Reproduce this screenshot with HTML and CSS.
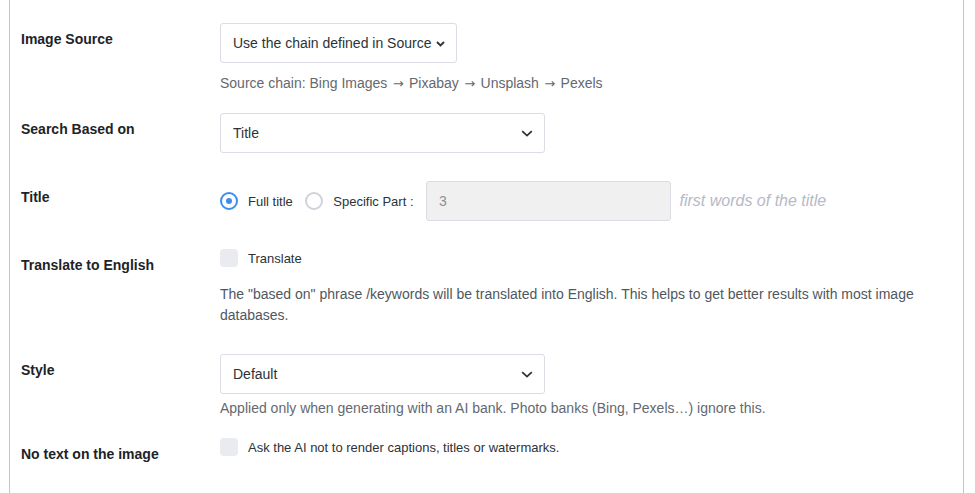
FILE: index.html
```html
<!DOCTYPE html>
<html lang="en">
<head>
<meta charset="utf-8">
<title>Image settings</title>
<link rel="stylesheet" href="styles.css">
</head>
<body>
<div class="panel">
  <div class="row tight">
    <div class="label">Image Source</div>
    <div class="value">
      <div class="select select-fit">
        <span>Use the chain defined in Source</span>
        <svg class="chev small" width="9" height="6" viewBox="0 0 9 6"><path d="M1 1 L4.5 4.5 L8 1" fill="none" stroke="#2c3338" stroke-width="1.8"/></svg>
      </div>
      <p class="help">Source chain: Bing Images <span class="arrow">→</span> Pixabay <span class="arrow">→</span> Unsplash <span class="arrow">→</span> Pexels</p>
    </div>
  </div>

  <div class="row">
    <div class="label">Search Based on</div>
    <div class="value">
      <div class="select">
        <span>Title</span>
        <svg class="chev" width="12" height="7" viewBox="0 0 12 7"><path d="M1.2 1.2 L6 5.6 L10.8 1.2" fill="none" stroke="#2c3338" stroke-width="1.8"/></svg>
      </div>
    </div>
  </div>

  <div class="row">
    <div class="label">Title</div>
    <div class="value">
      <div class="inline">
        <span class="radio checked"></span>
        <span class="opt">Full title</span>
        <span class="radio"></span>
        <span class="opt">Specific Part :</span>
        <div class="input">3</div>
        <span class="hint">first words of the title</span>
      </div>
    </div>
  </div>

  <div class="row">
    <div class="label">Translate to English</div>
    <div class="value">
      <div class="check-line">
        <span class="checkbox"></span>
        <span class="opt">Translate</span>
      </div>
      <p class="desc">The "based on" phrase /keywords will be translated into English. This helps to get better results with most image databases.</p>
    </div>
  </div>

  <div class="row tight">
    <div class="label">Style</div>
    <div class="value">
      <div class="select">
        <span>Default</span>
        <svg class="chev" width="12" height="7" viewBox="0 0 12 7"><path d="M1.2 1.2 L6 5.6 L10.8 1.2" fill="none" stroke="#2c3338" stroke-width="1.8"/></svg>
      </div>
      <p class="help help-near">Applied only when generating with an AI bank. Photo banks (Bing, Pexels…) ignore this.</p>
    </div>
  </div>

  <div class="row">
    <div class="label">No text on the image</div>
    <div class="value">
      <div class="check-line">
        <span class="checkbox"></span>
        <span class="opt">Ask the AI not to render captions, titles or watermarks.</span>
      </div>
    </div>
  </div>
</div>
</body>
</html>
```

FILE: styles.css
```css
html, body {
  margin: 0;
  padding: 0;
  background: #ffffff;
}

body {
  font-family: "Liberation Sans", Arial, sans-serif;
  color: #2c3338;
  height: 493px;
  overflow: hidden;
}

.panel {
  margin-left: 9px;
  width: 955px;
  min-height: 493px;
  border-left: 1px solid #c3c4c7;
  border-right: 1px solid #c3c4c7;
  padding: 9px 0 0 11px;
  box-sizing: border-box;
}

.row {
  display: grid;
  grid-template-columns: 199px 1fr;
  padding: 14px 0;
}

.row.tight {
  padding-bottom: 6px;
}

.label {
  font-size: 14px;
  font-weight: bold;
  color: #1d2327;
  line-height: 20px;
  padding-top: 6px;
}

.value {
  padding-right: 10px;
}

.select {
  box-sizing: border-box;
  width: 325px;
  height: 40px;
  border: 1px solid #dcdde4;
  border-radius: 3px;
  background: #fff;
  display: flex;
  align-items: center;
  justify-content: space-between;
  padding: 0 11px 0 12px;
  font-size: 14px;
  color: #2c3338;
}

.select-fit {
  width: 237px;
}

.chev {
  display: block;
  margin-top: 1px;
}

.help {
  margin: 10px 0 0;
  font-size: 14px;
  line-height: 20px;
  height: 20px;
  color: #646970;
}

.arrow {
  font-family: "DejaVu Sans", sans-serif;
  font-size: 13px;
  line-height: 1px;
  margin: 0 1.5px;
}

.help-near {
  margin-top: 4px;
}

.inline {
  display: flex;
  align-items: center;
  height: 40px;
}

.radio {
  box-sizing: border-box;
  width: 18px;
  height: 18px;
  border-radius: 50%;
  border: 2px solid #cfd1dc;
  background: #fff;
  position: relative;
  flex: none;
}

.radio.checked {
  border-color: #3a8ef0;
}

.radio.checked::after {
  content: "";
  position: absolute;
  left: 4px;
  top: 4px;
  width: 6px;
  height: 6px;
  border-radius: 50%;
  background: #3a8ef0;
}

.opt {
  font-size: 13px;
  color: #2c3338;
  margin-left: 10px;
  margin-right: 12.5px;
  white-space: nowrap;
}

.input {
  box-sizing: border-box;
  width: 245px;
  height: 40px;
  background: #f0f0f1;
  border: 1px solid #dcdde4;
  border-radius: 3px;
  padding-left: 12px;
  display: flex;
  align-items: center;
  font-size: 14px;
  color: #8c8f94;
}

.hint {
  margin-left: 8.5px;
  font-size: 16px;
  font-style: italic;
  color: #b6b9c6;
  white-space: nowrap;
}

.check-line {
  display: flex;
  align-items: center;
  height: 18px;
  margin-top: 0;
}

.checkbox {
  box-sizing: border-box;
  width: 18px;
  height: 18px;
  border-radius: 4px;
  background: #eaebf0;
  flex: none;
}

.desc {
  margin: 17px 0 0;
  font-size: 14px;
  line-height: 21px;
  color: #50575e;
}
```
